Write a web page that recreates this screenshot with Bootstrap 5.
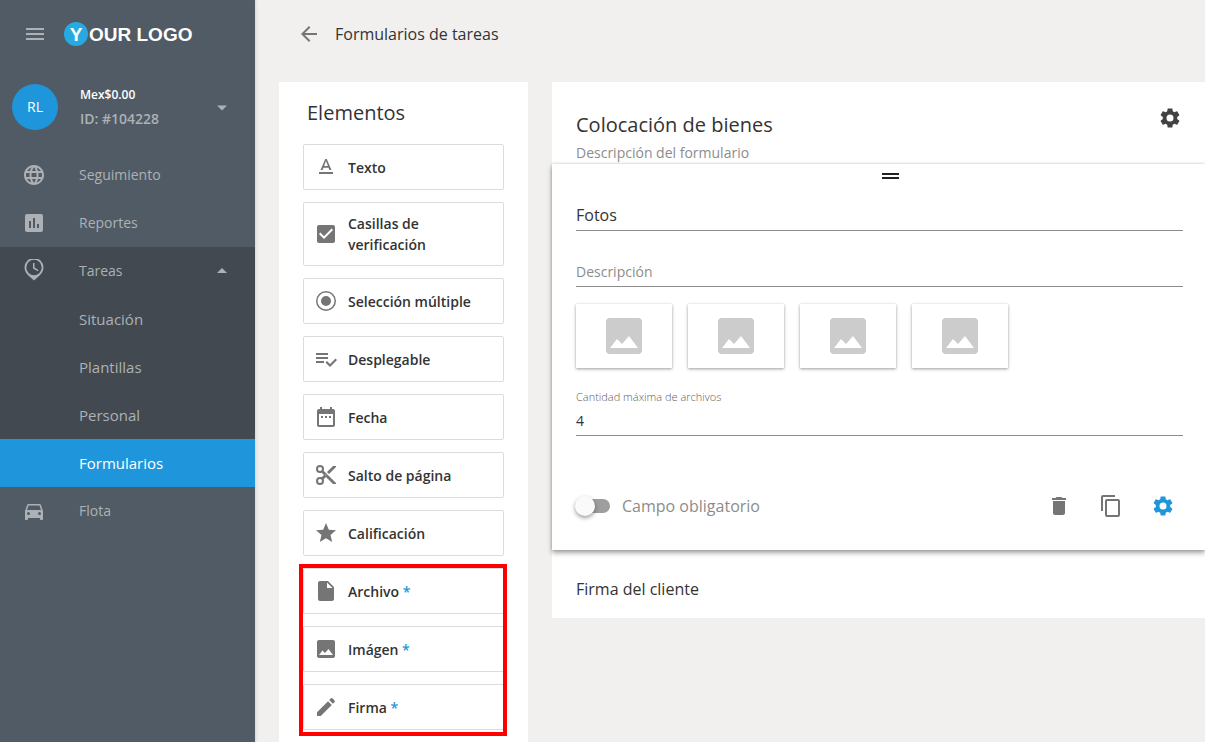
<!DOCTYPE html>
<html lang="es">
<head>
<meta charset="utf-8">
<meta name="viewport" content="width=device-width, initial-scale=1">
<title>Formularios de tareas</title>
<link href="https://cdn.jsdelivr.net/npm/bootstrap@5.3.0/dist/css/bootstrap.min.css" rel="stylesheet">
<style>
body{font-family:"Open Sans",sans-serif;background:#f1f0ee;color:#333;font-size:14px;line-height:20px}
svg{display:block;fill:currentColor;flex:none}
.sidebar{width:255px;background:#505b65;color:#adb1b5;box-shadow:0 0 4px rgba(0,0,0,.2)}
.side-head{height:68px;padding-left:22px;gap:16px}
.plain-btn{background:none;border:0;padding:0;color:inherit;line-height:inherit}
.brand{font:bold 19px/25px "Liberation Sans",sans-serif;color:#fff;text-decoration:none;gap:1px}
.brand-mark{width:24px;height:24px;border-radius:50%;background:#27aae1;text-align:center}
.account{height:83px;padding:0 21px 6px 12px;gap:22px}
.avatar{width:46px;height:46px;border-radius:50%;background:#1f96dc;color:#fff;font-weight:500}
.balance{font-size:12px;color:#fff;font-weight:600;line-height:24px}
.account-id{font-weight:600;line-height:24px}
.side-link{height:48px;padding:0 21px 0 22px;gap:33px;color:inherit;text-decoration:none}
.side-group{background:#424950}
.side-group .sub{padding-left:79px;font-size:15px}
.side-group .current{background:#1f96dc;color:#fff;font-weight:500}
.topbar{height:68px;padding-left:42px;gap:14px}
.topbar h1{font-size:16px;line-height:24px;font-weight:400;margin:0}
.boards{padding:14px 0 0 24px;gap:24px}
.palette{width:249px;padding:16px 24px 12px;background:#fff}
.panel-title{font-size:20px;line-height:30px;font-weight:400;margin:0}
.palette .panel-title{padding:0 4px;margin-bottom:16px}
.stack{display:grid;gap:12px}
.element{min-height:46px;padding:10px;gap:10px;border:1px solid #dcdcdc;border-radius:2px;background:#fff;text-align:left;font-weight:600;line-height:21px;color:#333}
.element svg{color:#757575}
.star{color:#1f96dc}
.marked{position:relative}
.marked::after{content:"";position:absolute;inset:-4px -3px -6px -4px;border:4px solid #f00;pointer-events:none}
.form-board{background:#fff}
.form-top{height:82px;padding:28px 22px 0 24px}
.line-input{display:block;width:100%;height:28px;border:0;border-bottom:1px solid #8c8c8c;padding:0 0 3px;background:none;outline:0;color:#333;font-size:16px;line-height:24px;border-radius:0}
.line-input::placeholder{color:#8c8c8c;opacity:1}
.line-input.small-text{font-size:14px}
.bare{border:0}
.field-card{position:relative;background:#fff;padding:9px 0 32px 24px;box-shadow:0 3px 5px rgba(0,0,0,.35),0 0 3px rgba(0,0,0,.2)}
.field-body{padding:24px 22px 0 0}
.grip{width:17px;height:6px;border:solid #212121;border-width:2px 0}
.description{margin-top:28px}
.thumbs{gap:16px;margin-top:17px}
.thumb{width:96px;height:64px;background:#fff;box-shadow:0 1px 3px rgba(0,0,0,.4);color:#ccc}
.tiny{font-size:11px;line-height:16px;color:#616161;font-weight:300;margin:21px 0 3px}
.field-actions{margin-top:58px}
.toggle{appearance:none;width:34px;height:14px;margin:0 12px 0 0;border-radius:7px;background:#9e9e9e;position:relative}
.toggle::before{content:"";position:absolute;left:-1px;top:-3px;width:20px;height:20px;border-radius:50%;background:#fafafa;box-shadow:0 2px 4px rgba(0,0,0,.4)}
.toggle:checked::before{left:15px}
.toggle-label{font-size:16px;line-height:24px;color:#8c8c8c}
.next-field{height:68px;padding:10px 24px 0;font-size:16px}
</style>
</head>
<body>
<svg width="0" height="0" class="position-absolute" aria-hidden="true">
<symbol id="gear" viewBox="0 0 24 24"><path d="M19.140 12.940c.04-.3.06-.61.06-.94 0-.32-.02-.64-.07-.94l2.030-1.580c.18-.14.23-.41.12-.61l-1.920-3.320c-.12-.22-.37-.29-.59-.22l-2.390.96c-.5-.38-1.030-.7-1.620-.94l-.36-2.540c-.04-.24-.24-.41-.48-.41h-3.840c-.24 0-.43.17-.47.41l-.36 2.540c-.59.24-1.130.57-1.620.94l-2.390-.96c-.22-.08-.47 0-.59.22L2.740 8.870c-.12.21-.08.47.12.61l2.030 1.580c-.05.3-.09.63-.09.94s.02.64.07.94l-2.030 1.580c-.18.14-.23.41-.12.61l1.920 3.320c.12.22.37.29.59.22l2.390-.96c.5.38 1.030.7 1.620.94l.36 2.540c.05.24.24.41.48.41h3.840c.24 0 .44-.17.47-.41l.36-2.540c.59-.24 1.130-.56 1.620-.94l2.390.96c.22.08.47 0 .59-.22l1.920-3.320c.12-.22.07-.47-.12-.61l-2.010-1.580zM12 15.500a3.500 3.500 0 1 1 0-7 3.500 3.500 0 0 1 0 7z"/></symbol>
<symbol id="photo" viewBox="0 0 24 24"><path d="M21 19V5c0-1.100-.9-2-2-2H5c-1.100 0-2 .9-2 2v14c0 1.100.9 2 2 2h14c1.100 0 2-.9 2-2zM5 18l3.500-4.500 2.500 2.500 3.500-4 4.500 6z"/></symbol>
<symbol id="picture" viewBox="0 0 36 36"><path d="M4 0h28a4 4 0 0 1 4 4v28a4 4 0 0 1-4 4H4a4 4 0 0 1-4-4V4a4 4 0 0 1 4-4zm0 30h28L23 18l-7 8-5-5z"/></symbol>
</svg>
<div class="d-flex min-vh-100">
  <nav class="sidebar flex-shrink-0">
    <div class="side-head d-flex align-items-center">
      <button class="plain-btn" aria-label="Menú"><svg width="26" height="24" viewBox="0 0 26 24"><path d="M4 6h18v2H4zm0 5h18v2H4zm0 5h18v2H4z"/></svg></button>
      <a href="#" class="brand d-flex"><span class="brand-mark">Y</span><span>OUR LOGO</span></a>
    </div>
    <div class="account d-flex align-items-center">
      <div class="avatar d-flex align-items-center justify-content-center">RL</div>
      <div class="flex-grow-1"><div class="balance">Mex$0.00</div><div class="account-id">ID: #104228</div></div>
      <button class="plain-btn" aria-label="Cuenta"><svg width="24" height="24" viewBox="0 0 24 24"><path d="M7 10.500l5 5 5-5z"/></svg></button>
    </div>
    <a href="#" class="side-link d-flex align-items-center"><svg width="24" height="24" viewBox="0 0 24 24"><path d="M11.990 2C6.470 2 2 6.480 2 12s4.470 10 9.990 10C17.520 22 22 17.520 22 12S17.520 2 11.990 2zm6.930 6h-2.950c-.32-1.250-.78-2.450-1.380-3.560 1.840.63 3.370 1.910 4.330 3.560zM12 4.040c.83 1.200 1.480 2.530 1.910 3.960h-3.820c.43-1.430 1.080-2.760 1.910-3.960zM4.260 14C4.100 13.360 4 12.690 4 12s.1-1.360.26-2h3.380c-.08.66-.14 1.320-.14 2s.06 1.340.14 2H4.260zm.82 2h2.950c.32 1.250.78 2.450 1.380 3.560-1.840-.63-3.370-1.900-4.330-3.560zm2.950-8H5.080c.96-1.660 2.490-2.930 4.330-3.560C8.810 5.550 8.350 6.750 8.030 8zM12 19.960c-.83-1.200-1.480-2.530-1.910-3.960h3.820c-.43 1.430-1.080 2.760-1.910 3.960zM14.340 14H9.660c-.09-.66-.16-1.320-.16-2s.07-1.350.16-2h4.680c.09.65.16 1.320.16 2s-.07 1.340-.16 2zm.25 5.560c.6-1.110 1.060-2.310 1.380-3.560h2.950c-.96 1.650-2.490 2.930-4.330 3.560zM16.360 14c.08-.66.14-1.320.14-2s-.06-1.340-.14-2h3.380c.16.64.26 1.310.26 2s-.1 1.360-.26 2h-3.380z"/></svg>Seguimiento</a>
    <a href="#" class="side-link d-flex align-items-center"><svg width="24" height="24" viewBox="0 0 24 24"><path d="M19 3H5c-1.100 0-2 .9-2 2v14c0 1.100.9 2 2 2h14c1.100 0 2-.9 2-2V5c0-1.100-.9-2-2-2zM9 17H7v-7h2v7zm4 0h-2V7h2v10zm4 0h-2v-4h2v4z"/></svg>Reportes</a>
    <div class="side-group">
      <a href="#" class="side-link d-flex align-items-center"><svg width="24" height="24" viewBox="0 1 24 24"><path fill-rule="evenodd" d="M12 0a9.500 9.500 0 0 1 9.500 9.500c0 4-2.500 7-5 9L12 22.500 7.500 18.500c-2.500-2-5-5-5-9A9.500 9.500 0 0 1 12 0zm0 1.800A7.700 7.700 0 1 0 12 17.200 7.700 7.700 0 0 0 12 1.800zM11 5h1.500v4.600l4 2.400-.7 1.300L11 10.500z"/></svg><span class="flex-grow-1">Tareas</span><svg width="24" height="24" viewBox="0 0 24 24"><path d="M7 14l5-5 5 5z"/></svg></a>
      <a href="#" class="side-link sub d-flex align-items-center">Situación</a>
      <a href="#" class="side-link sub d-flex align-items-center">Plantillas</a>
      <a href="#" class="side-link sub d-flex align-items-center">Personal</a>
      <a href="#" class="side-link sub current d-flex align-items-center">Formularios</a>
    </div>
    <a href="#" class="side-link d-flex align-items-center"><svg width="24" height="24" viewBox="0 -1 24 24"><path d="M18.920 5.010C18.720 4.420 18.160 4 17.500 4h-11c-.66 0-1.210.42-1.420 1.010L3 11v8c0 .55.45 1 1 1h1c.55 0 1-.45 1-1v-1h12v1c0 .55.45 1 1 1h1c.55 0 1-.45 1-1v-8l-2.080-5.990zM6.500 15a1.500 1.500 0 1 1 0-3 1.500 1.500 0 0 1 0 3zm11 0a1.500 1.500 0 1 1 0-3 1.500 1.500 0 0 1 0 3zM5 10l1.500-4.500h11L19 10H5z"/></svg>Flota</a>
  </nav>
  <main class="flex-grow-1 d-flex flex-column overflow-hidden">
    <header class="topbar d-flex align-items-center">
      <button class="plain-btn" aria-label="Volver"><svg width="24" height="24" viewBox="0 0 24 24" color="#757575"><path d="M20 11H7.830l5.590-5.590L12 4l-8 8 8 8 1.410-1.410L7.830 13H20v-2z"/></svg></button>
      <h1>Formularios de tareas</h1>
    </header>
    <div class="boards d-flex flex-grow-1">
      <aside class="palette flex-shrink-0">
        <h2 class="panel-title">Elementos</h2>
        <div class="stack">
          <button class="element d-flex align-items-center"><svg width="24" height="24" viewBox="0 0 24 24"><path d="M5 17v2h14v-2zM9.500 12.800h5l.9 2.200h2.100L12.750 4h-1.500L6.500 15h2.100zM12 5.980L13.870 11h-3.740z"/></svg>Texto</button>
          <button class="element d-flex align-items-center"><svg width="24" height="24" viewBox="0 0 24 24"><path d="M19 3H5c-1.110 0-2 .9-2 2v14c0 1.100.89 2 2 2h14c1.110 0 2-.9 2-2V5c0-1.100-.89-2-2-2zm-9 14l-5-5 1.410-1.410L10 14.170l7.590-7.590L19 8l-9 9z"/></svg>Casillas de verificación</button>
          <button class="element d-flex align-items-center"><svg width="24" height="24" viewBox="0 0 24 24"><path d="M12 7a5 5 0 1 0 0 10 5 5 0 0 0 0-10zm0-5a10 10 0 1 0 0 20 10 10 0 0 0 0-20zm0 18.500a8.500 8.500 0 1 1 0-17 8.500 8.500 0 0 1 0 17z"/></svg>Selección múltiple</button>
          <button class="element d-flex align-items-center"><svg width="24" height="24" viewBox="0 0 24 24"><path d="M14 10H2v2h12v-2zm0-4H2v2h12V6zM2 16h8v-2H2v2zm19.500-4.500L23 13l-6.990 7-4.510-4.500L13 14l3.010 3 5.490-5.500z"/></svg>Desplegable</button>
          <button class="element d-flex align-items-center"><svg width="24" height="24" viewBox="0 0 24 24"><path d="M9 11H7v2h2v-2zm4 0h-2v2h2v-2zm4 0h-2v2h2v-2zm2-7h-1V2h-2v2H8V2H6v2H5c-1.110 0-1.990.9-1.990 2L3 20a2 2 0 0 0 2 2h14c1.100 0 2-.9 2-2V6c0-1.100-.9-2-2-2zm0 16H5V9h14v11z"/></svg>Fecha</button>
          <button class="element d-flex align-items-center"><svg width="24" height="24" viewBox="0 0 24 24"><path d="M9.640 7.640c.23-.5.36-1.050.36-1.640a4 4 0 1 0-4 4c.59 0 1.140-.13 1.640-.36L10 12l-2.360 2.360C7.140 14.130 6.590 14 6 14a4 4 0 1 0 4 4c0-.59-.13-1.140-.36-1.640L12 14l7 7h3v-1L9.640 7.640zM6 8a2 2 0 1 1 0-4 2 2 0 0 1 0 4zm0 12a2 2 0 1 1 0-4 2 2 0 0 1 0 4zm6-7.500a.5.5 0 1 1 0-1 .5.5 0 0 1 0 1zM19 3l-6 6 2 2 7-7V3z"/></svg>Salto de página</button>
          <button class="element d-flex align-items-center"><svg width="24" height="24" viewBox="0 0 24 24"><path d="M12 17.270L18.180 21l-1.640-7.030L22 9.240l-7.190-.61L12 2 9.190 8.630 2 9.240l5.460 4.730L5.820 21z"/></svg>Calificación</button>
          <div class="stack marked">
            <button class="element d-flex align-items-center"><svg width="24" height="24" viewBox="0 0 24 24"><path fill-rule="evenodd" d="M6 2c-1.100 0-2 .9-2 2v16c0 1.100.9 2 2 2h12c1.100 0 2-.9 2-2V8l-6-6H6zm7 7V3.500L18.500 9H13z"/></svg><span>Archivo <span class="star">*</span></span></button>
            <button class="element d-flex align-items-center"><svg width="24" height="24"><use href="#photo"/></svg><span>Imágen <span class="star">*</span></span></button>
            <button class="element d-flex align-items-center"><svg width="24" height="24" viewBox="0 0 24 24"><path d="M3 17.250V21h3.750L17.810 9.940l-3.750-3.750L3 17.250zM20.710 7.040c.39-.39.39-1.020 0-1.410l-2.340-2.340a1 1 0 0 0-1.410 0l-1.830 1.830 3.750 3.750 1.830-1.830z"/></svg><span>Firma <span class="star">*</span></span></button>
          </div>
        </div>
      </aside>
      <form class="flex-grow-1">
        <div class="form-board">
          <div class="form-top">
            <div class="d-flex justify-content-between align-items-start">
              <h2 class="panel-title">Colocación de bienes</h2>
              <button type="button" class="plain-btn" aria-label="Ajustes del formulario"><svg width="25" height="16" viewBox="0 4 25 16" overflow="visible" color="#424242"><use href="#gear" width="24" height="24"/></svg></button>
            </div>
            <input class="line-input small-text bare" placeholder="Descripción del formulario" aria-label="Descripción del formulario">
          </div>
          <section class="field-card">
            <div class="grip mx-auto"></div>
            <div class="field-body">
              <input class="line-input" value="Fotos" aria-label="Título">
              <input class="line-input small-text description" placeholder="Descripción" aria-label="Descripción">
              <div class="thumbs d-flex">
                <div class="thumb d-flex align-items-center justify-content-center"><svg width="36" height="36"><use href="#picture"/></svg></div>
                <div class="thumb d-flex align-items-center justify-content-center"><svg width="36" height="36"><use href="#picture"/></svg></div>
                <div class="thumb d-flex align-items-center justify-content-center"><svg width="36" height="36"><use href="#picture"/></svg></div>
                <div class="thumb d-flex align-items-center justify-content-center"><svg width="36" height="36"><use href="#picture"/></svg></div>
              </div>
              <label for="max" class="tiny d-block">Cantidad máxima de archivos</label>
              <input id="max" class="line-input small-text" value="4">
              <div class="field-actions d-flex align-items-center">
                <input type="checkbox" class="toggle" id="req" role="switch">
                <label for="req" class="toggle-label flex-grow-1">Campo obligatorio</label>
                <div class="d-flex gap-4">
                  <button type="button" class="plain-btn" aria-label="Eliminar"><svg width="28" height="24" viewBox="-2 0 28 24" color="#757575"><path d="M6 19c0 1.100.9 2 2 2h8c1.100 0 2-.9 2-2V7H6v12zM19 4h-3.500l-1-1h-5l-1 1H5v2h14V4z"/></svg></button>
                  <button type="button" class="plain-btn" aria-label="Duplicar"><svg width="28" height="24" viewBox="-2 0 28 24" color="#757575"><path d="M16 1H4c-1.100 0-2 .9-2 2v14h2V3h12V1zm3 4H8c-1.100 0-2 .9-2 2v14c0 1.100.9 2 2 2h11c1.100 0 2-.9 2-2V7c0-1.100-.9-2-2-2zm0 16H8V7h11v14z"/></svg></button>
                  <button type="button" class="plain-btn" aria-label="Ajustes del campo"><svg width="34" height="24" viewBox="-2 0 34 24" color="#1f96dc"><use href="#gear" width="24" height="24"/></svg></button>
                </div>
              </div>
            </div>
          </section>
          <div class="next-field d-flex align-items-center">Firma del cliente</div>
        </div>
      </form>
    </div>
  </main>
</div>
<script src="https://cdn.jsdelivr.net/npm/bootstrap@5.3.0/dist/js/bootstrap.bundle.min.js"></script>
</body>
</html>
